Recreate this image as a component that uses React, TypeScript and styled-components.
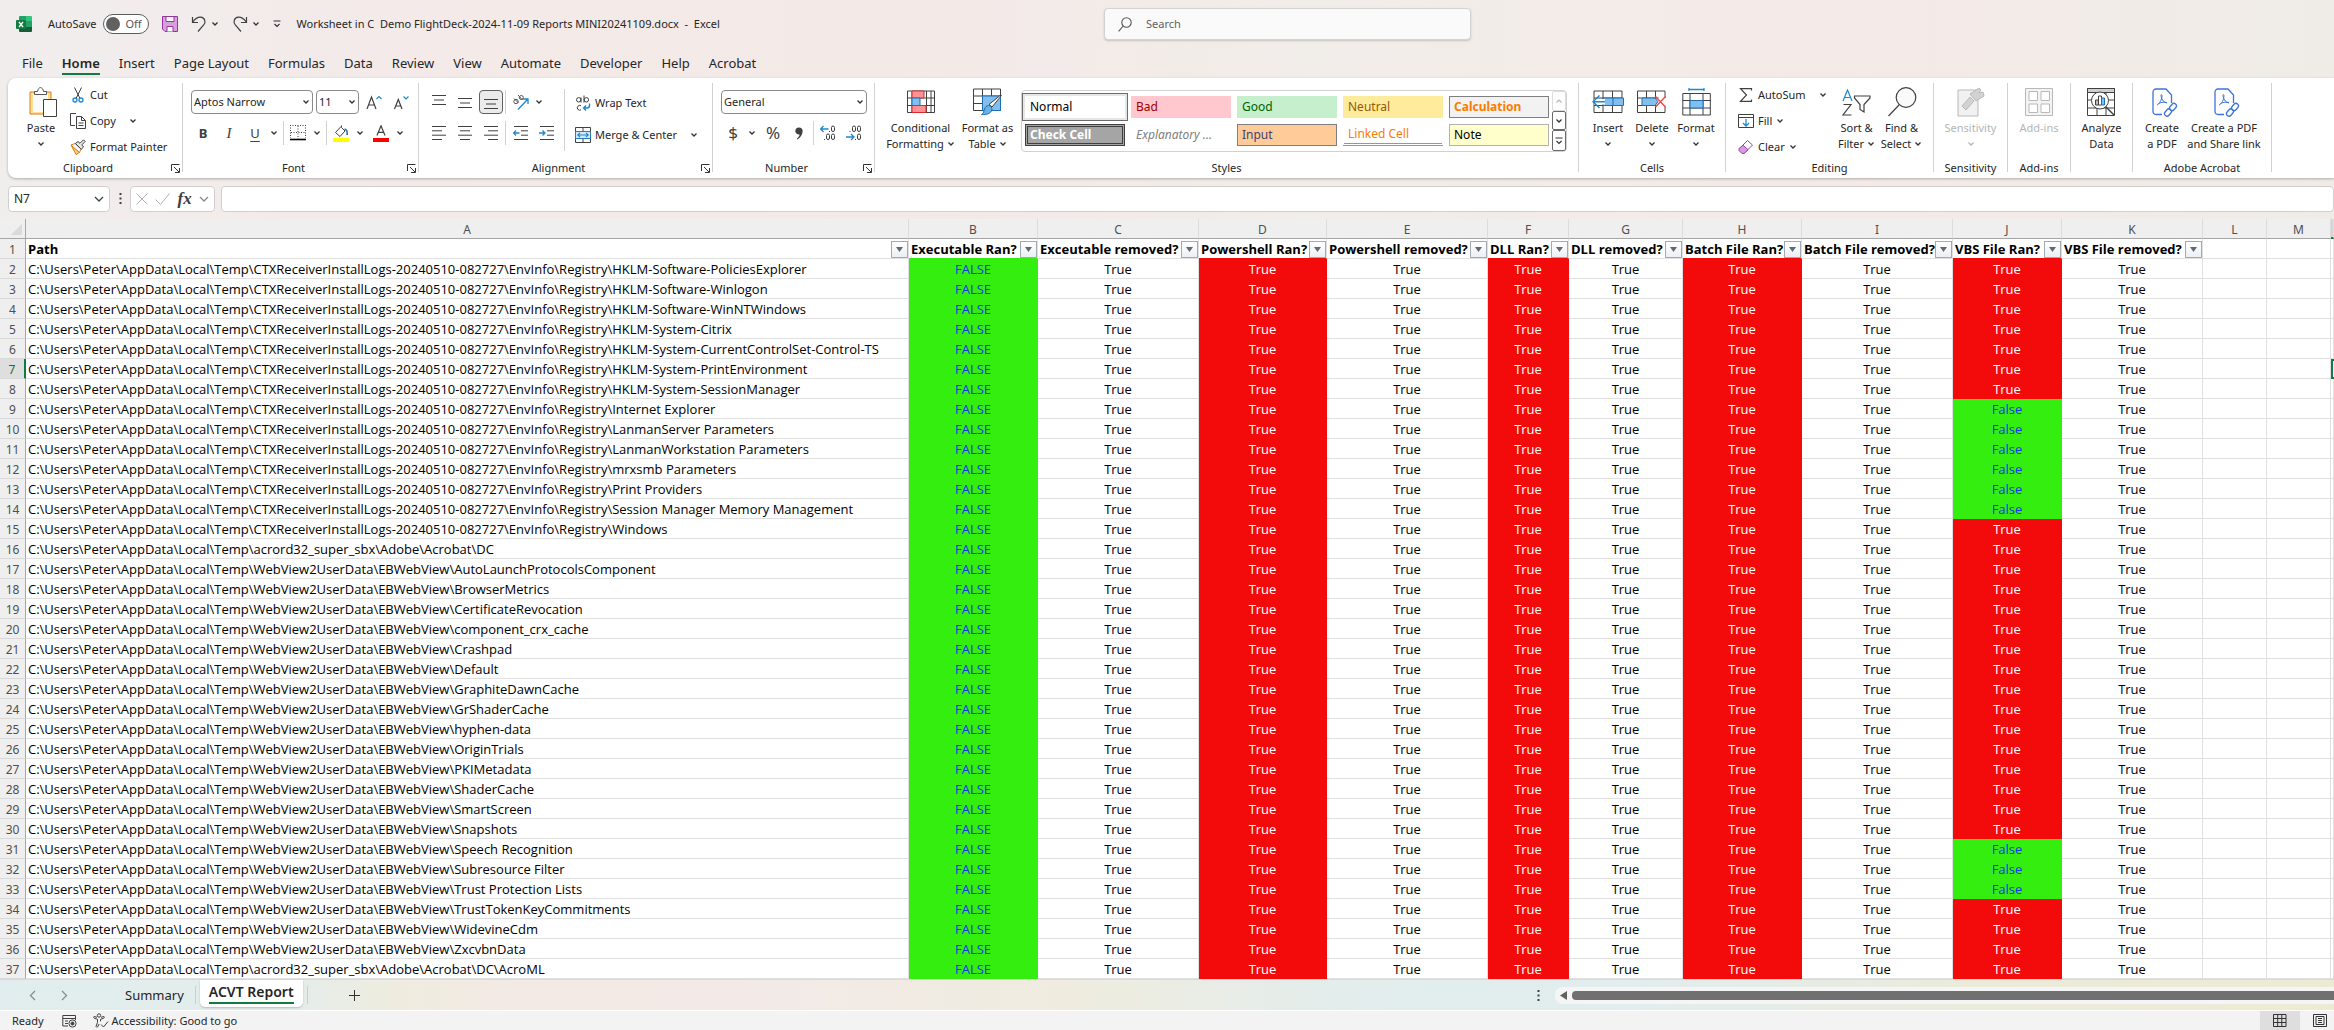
import React from "react";
import styled, { createGlobalStyle, css } from "styled-components";

const UI_FONT = '"Noto Sans", "Open Sans", sans-serif';
const CELL_FONT = '"Open Sans", "Noto Sans", sans-serif';
const INK = "#262626";
const BLUE = "#1e88d2";
const GREEN = "#107c41";

const GlobalStyle = createGlobalStyle`
  * { box-sizing: border-box; }
  body { margin: 0; overflow: hidden; }
  button, input, select { font: inherit; color: inherit; }
  button { border: 0; padding: 0; background: none; }
  svg { display: block; flex: none; }
`;

const Window = styled.div`
  display: flex;
  flex-direction: column;
  height: 100vh;
  overflow: hidden;
  font: 11px/16px ${UI_FONT};
  color: ${INK};
  background: linear-gradient(90deg, #f0eeed 0, #f3eae9 16%, #f3eae8 42%, #f1ede9 56%, #f4eae8 80%, #efece7 100%);
`;

/* ---------- title bar ---------- */

const TitleBar = styled.header`
  display: grid;
  grid-template-columns: minmax(0, 1104fr) 367px minmax(0, 863fr);
  align-items: center;
  height: 48px;
`;
const QuickAccess = styled.div`
  display: flex;
  align-items: center;
  gap: 13px;
  padding-left: 16px;
`;
const AutoSave = styled.label`
  display: flex;
  align-items: center;
  gap: 7px;
  margin-left: 3px;
  white-space: nowrap;
`;
const Toggle = styled.span`
  display: flex;
  align-items: center;
  gap: 5px;
  width: 46px;
  height: 20px;
  padding-left: 2px;
  border: 1px solid #5c5c5c;
  border-radius: 10px;
  background: #fff;
  color: #555;
`;
const ToggleInput = styled.input`
  appearance: none;
  width: 14px;
  height: 14px;
  margin: 0;
  border-radius: 50%;
  background: #616161;
`;
const ToolPair = styled.div`
  display: flex;
  align-items: center;
  gap: 4px;
`;
const DocTitle = styled.h1`
  margin: 0 0 0 2px;
  font: inherit;
  white-space: pre;
`;
const SearchBox = styled.label`
  display: flex;
  align-items: center;
  gap: 14px;
  height: 32px;
  padding-left: 13px;
  border: 1px solid #d6d2d1;
  border-radius: 4px;
  background: #fafafa;
  box-shadow: 0 1px 2px rgba(0, 0, 0, 0.18);
`;
const SearchInput = styled.input`
  flex: 1;
  min-width: 0;
  border: 0;
  padding: 0;
  background: none;
  &::placeholder { color: #616161; opacity: 1; }
`;

/* ---------- ribbon ---------- */

const TabList = styled.nav`
  display: flex;
  gap: 19px;
  height: 30px;
  padding: 2px 0 0 22px;
`;
const RibbonTab = styled.button<{ $active?: boolean }>`
  height: 25px;
  padding-top: 3px;
  border-bottom: 2px solid ${(p) => (p.$active ? GREEN : "transparent")};
  font: ${(p) => (p.$active ? 600 : 400)} 13px/20px ${UI_FONT};
  white-space: nowrap;
`;
const Ribbon = styled.section`
  display: flex;
  height: 100px;
  margin-left: 8px;
  border-radius: 8px 0 0 8px;
  background: #fff;
  box-shadow: 0 1px 3px rgba(0, 0, 0, 0.28);
`;
const Divider = styled.span`
  flex: none;
  width: 1px;
  margin: 5px 0 6px;
  background: #d1d1d1;
`;
const GroupBox = styled.div<{ $w: number }>`
  display: flex;
  flex-direction: column;
  flex: none;
  width: ${(p) => p.$w}px;
  padding: 5px 0 2px;
`;
const GroupBody = styled.div<{ $pad: number }>`
  display: flex;
  flex: 1;
  padding-left: ${(p) => p.$pad}px;
`;
const GroupFooter = styled.div<{ $launcher?: boolean }>`
  display: grid;
  grid-template-columns: ${(p) => (p.$launcher ? "1fr 14px" : "1fr")};
  align-items: center;
  height: 16px;
  white-space: nowrap;
`;
const GroupName = styled.span`
  justify-self: center;
`;
const LauncherButton = styled.button`
  display: grid;
  place-items: center;
`;
const Rows = styled.div`
  display: flex;
  flex-direction: column;
  gap: 7px;
  padding-top: 7px;
`;
const ToolRow = styled.div<{ $gap?: number }>`
  display: flex;
  gap: ${(p) => p.$gap ?? 2}px;
  height: 24px;
`;
const RowDivider = styled.span`
  width: 1px;
  background: #d1d1d1;
`;
const TallDivider = styled.span`
  width: 1px;
  height: 62px;
  margin: 6px 10px 0 6px;
  background: #d1d1d1;
`;
const IconButton = styled.button<{ $on?: boolean }>`
  display: grid;
  place-items: center;
  width: 24px;
  height: 24px;
  border-radius: 4px;
  ${(p) => p.$on && css`
    border: 1px solid #616161;
    background: #ebebeb;
  `}
`;
const ChevronButton = styled.button`
  display: grid;
  place-items: center;
  width: 14px;
  height: 24px;
`;
const Split = styled.div`
  display: flex;
`;
const Glyph = styled.span<{ $kind: "bold" | "italic" | "underline" | "symbol" | "function" }>`
  color: #404040;
  line-height: 20px;
  ${(p) => p.$kind === "bold" && css`font-weight: 700; font-size: 13px;`}
  ${(p) => p.$kind === "italic" && css`font: italic 15px/20px "Liberation Serif", serif;`}
  ${(p) => p.$kind === "function" && css`font: italic 700 17px/20px "Liberation Serif", serif;`}
  ${(p) => p.$kind === "underline" && css`font-size: 13px; text-decoration: underline; text-underline-offset: 3px;`}
  ${(p) => p.$kind === "symbol" && css`font-size: 17px;`}
`;
const Combo = styled.span<{ $w: number }>`
  display: grid;
  grid-template-columns: 1fr 10px;
  align-items: center;
  width: ${(p) => p.$w}px;
  height: 24px;
  border: 1px solid #8a8a8a;
  border-radius: 4px;
  background: #fff;
  & > svg { grid-area: 1 / 2; pointer-events: none; }
`;
const ComboSelect = styled.select`
  grid-area: 1 / 1 / 2 / 3;
  appearance: none;
  width: 100%;
  height: 22px;
  border: 0;
  padding: 0 2px;
  background: none;
`;
const CommandColumn = styled.div<{ $left?: number; $gap?: number; $top?: number; $w?: number }>`
  display: flex;
  flex-direction: column;
  gap: ${(p) => p.$gap ?? 2}px;
  padding: ${(p) => p.$top ?? 0}px 0 0 ${(p) => p.$left ?? 0}px;
  width: ${(p) => (p.$w ? `${p.$w}px` : "auto")};
`;
const Command = styled.button<{ $wide?: boolean }>`
  display: flex;
  align-items: center;
  gap: 4px;
  height: 24px;
  white-space: nowrap;
  & > svg:last-child:not(:first-child) { margin-left: ${(p) => (p.$wide ? 9 : 0)}px; }
`;
const BigCommand = styled.button<{ $w: number }>`
  display: flex;
  flex-direction: column;
  align-items: center;
  align-self: flex-start;
  width: ${(p) => p.$w}px;
  padding-top: 4px;
  white-space: nowrap;
  &:disabled { color: #b5b5b5; }
`;
const BigIcon = styled.span`
  display: grid;
  place-items: center;
  height: 30px;
  margin-bottom: 3px;
`;
const BigLine = styled.span`
  display: flex;
  align-items: center;
  gap: 3px;
  height: 16px;
`;

/* ---------- cell style gallery ---------- */

const Gallery = styled.div`
  display: flex;
  width: 546px;
  height: 62px;
  margin-top: 7px;
  border: 1px solid #d1d1d1;
  border-radius: 4px;
`;
const Swatches = styled.div`
  display: grid;
  grid-template-columns: repeat(5, 100px);
  grid-auto-rows: 22px;
  gap: 6px;
  padding: 5px 3px;
`;
type Look = "normal" | "bad" | "good" | "neutral" | "calculation" | "check" | "explain" | "input" | "linked" | "note";
const looks: Record<Look, ReturnType<typeof css>> = {
  normal: css`background: #fff; color: #000; box-shadow: 0 0 0 2px #e6e6e6, 0 0 0 3px #6b6b6b;`,
  bad: css`background: #ffc7ce; color: #9c0006;`,
  good: css`background: #c6efce; color: #006100;`,
  neutral: css`background: #ffeb9c; color: #9c5700;`,
  calculation: css`background: #f2f2f2; color: #fa7d00; font-weight: 700; border-color: #7f7f7f;`,
  check: css`background: #a5a5a5; color: #fff; font-weight: 700; border: 3px double #3f3f3f; padding-left: 2px;`,
  explain: css`color: #7f7f7f; font-style: italic;`,
  input: css`background: #ffcc99; color: #3f3f76; border-color: #7f7f7f;`,
  linked: css`color: #fa7d00; border-bottom: 3px double #ff8001;`,
  note: css`background: #ffffcc; color: #000; border-color: #b2b2b2;`,
};
const Swatch = styled.button<{ $look: Look }>`
  display: flex;
  align-items: center;
  padding: 0 0 0 4px;
  border: 1px solid transparent;
  font-size: 12px;
  text-align: left;
  white-space: nowrap;
  ${(p) => looks[p.$look]}
`;
const GalleryScroll = styled.div`
  display: grid;
  grid-template-rows: 20px 19px 21px;
  width: 14px;
`;
const ScrollStep = styled.button`
  display: grid;
  place-items: center;
  width: 14px;
  border: 1px solid #6b6b6b;
  border-radius: 2px;
  color: ${INK};
  &:disabled { border-color: #dcdcdc; color: #b5b5b5; }
`;

/* ---------- formula bar ---------- */

const FormulaBar = styled.div`
  display: flex;
  align-items: center;
  height: 41px;
  padding: 0 0 0 8px;
`;
const Field = styled.div<{ $w?: number }>`
  display: flex;
  align-items: center;
  justify-content: space-between;
  flex: ${(p) => (p.$w ? `0 0 ${p.$w}px` : "1")};
  min-width: 0;
  height: 26px;
  padding: 0 5px;
  border: 1px solid #d1cfce;
  border-radius: 4px;
  background: #fff;
`;
const BareInput = styled.input`
  flex: 1;
  min-width: 0;
  width: 0;
  padding: 0;
  border: 0;
  background: none;
  font-size: 12px;
`;
const BarDots = styled.span`
  display: grid;
  place-items: center;
  width: 20px;
`;
const Spacer = styled.span`
  width: 6px;
`;

/* ---------- grid ---------- */

const SheetArea = styled.main`
  flex: 1;
  min-height: 0;
  overflow: hidden;
  background: #fff;
`;
const Sheet = styled.table`
  width: 100%;
  table-layout: fixed;
  border-collapse: separate;
  border-spacing: 0;
  font: 13px/17px ${CELL_FONT};
  color: #000;
`;
const Col = styled.col<{ $w?: number }>`
  width: ${(p) => (p.$w ? `${p.$w}px` : "auto")};
`;
const ColumnHead = styled.th<{ $active?: boolean }>`
  height: 20px;
  padding: 1px 0 0;
  overflow: hidden;
  border-right: 1px solid #dcdcdc;
  border-bottom: ${(p) => (p.$active ? `2px solid ${GREEN}` : "1px solid #a6a6a6")};
  background: ${(p) => (p.$active ? "#d6d6d6" : "#efefef")};
  color: #505050;
  font: 12px/17px ${UI_FONT};
`;
const Corner = styled(ColumnHead)`
  border-right: 1px solid #a6a6a6;
`;
const CornerMark = styled.span`
  display: block;
  width: 11px;
  height: 11px;
  margin: 1px 3px 0 auto;
  background: #dadada;
  clip-path: polygon(100% 0, 100% 100%, 0 100%);
`;
const RowHead = styled.th<{ $active?: boolean }>`
  height: 20px;
  padding: 2px 0 0;
  border-right: ${(p) => (p.$active ? `2px solid ${GREEN}` : "1px solid #a6a6a6")};
  border-bottom: 1px solid #d9d9d9;
  background: ${(p) => (p.$active ? "#dedede" : "#efefef")};
  color: ${(p) => (p.$active ? "#0f703b" : "#505050")};
  font: 12px/17px ${UI_FONT};
`;
type Fill = "red" | "green" | undefined;
const fills = {
  red: { back: "#f30b0b", ink: "#fff" },
  green: { back: "#33ee0f", ink: "#1a35e8" },
};
const Cell = styled.td<{ $fill?: Fill; $left?: boolean }>`
  height: 20px;
  padding: 2px 0 0 ${(p) => (p.$left ? 2 : 0)}px;
  overflow: hidden;
  border-right: 1px solid #e0e0e0;
  border-bottom: 1px solid #e0e0e0;
  text-align: ${(p) => (p.$left ? "left" : "center")};
  white-space: nowrap;
  ${(p) => p.$fill && css`
    border-color: ${fills[p.$fill].back};
    background: ${fills[p.$fill].back};
    color: ${fills[p.$fill].ink};
  `}
`;
const FieldHead = styled.th<{ $fill?: Fill }>`
  height: 20px;
  padding: 0;
  border-right: 1px solid #e0e0e0;
  border-bottom: 1px solid ${(p) => (p.$fill ? fills[p.$fill].back : "#e0e0e0")};
  font-weight: 700;
  text-align: left;
`;
const FieldHeadInner = styled.div`
  display: flex;
  align-items: center;
  justify-content: space-between;
  height: 19px;
  padding: 1px 0 0 2px;
  white-space: nowrap;
`;
const FilterButton = styled.button`
  display: grid;
  place-items: center;
  flex: none;
  width: 17px;
  height: 17px;
  border: 1px solid #a3aab3;
  background: linear-gradient(#fff, #eceff3);
`;
const ActiveCell = styled(Cell)`
  border: 2px solid ${GREEN};
  border-right: 0;
`;

/* ---------- sheet tabs and status bar ---------- */

const SheetBar = styled.footer`
  display: grid;
  grid-template-columns: minmax(0, 1528fr) minmax(0, 806fr);
  height: 32px;
  border-top: 1px solid #d9d9d9;
  border-bottom: 1px solid #fff;
  background: linear-gradient(90deg, #e1edee 0, #e3edeb 12%, #efecdf 17%, #f3eae5 22%, #f3eae8 32%, #efecdf 46%, #e2edec 58%, #e1edee 70%, #ebebda 85%, #edead4 100%);
`;
const SheetTabs = styled.div`
  display: flex;
  align-items: flex-start;
  padding-left: 16px;
`;
const PageButton = styled.button`
  display: grid;
  place-items: center;
  width: 32px;
  height: 30px;
`;
const SheetTab = styled.button<{ $active?: boolean }>`
  height: 30px;
  padding: 0 9px;
  font-size: 13px;
  line-height: 21px;
  white-space: nowrap;
  ${(p) => p.$active && css`
    height: 27px;
    margin: 0 2px;
    padding-bottom: 2px;
    border-radius: 0 0 5px 5px;
    background: #fff;
    font-size: 14px;
    font-weight: 600;
    box-shadow: 0 1px 2px rgba(0, 0, 0, 0.2);
  `}
`;
const TabText = styled.span`
  display: block;
  border-bottom: 2px solid ${GREEN};
`;
const TabGroup = styled.div`
  display: flex;
  align-items: flex-start;
  margin-left: 36px;
`;
const TabDivider = styled.span`
  width: 1px;
  height: 18px;
  margin: 6px 2px 0;
  background: #c9cfce;
`;
const AddSheet = styled(PageButton)`
  margin-left: 29px;
`;
const ScrollZone = styled.div`
  display: flex;
  align-items: center;
`;
const ScrollTrack = styled.div`
  display: flex;
  align-items: center;
  gap: 5px;
  flex: 1;
  height: 17px;
  margin-left: 7px;
  padding-left: 5px;
  border-radius: 8px 0 0 8px;
  background: #f5f5f5;
`;
const ScrollThumb = styled.span`
  flex: 1;
  height: 9px;
  border-radius: 4px 0 0 4px;
  background: #707070;
`;
const StatusBar = styled.div`
  display: flex;
  align-items: center;
  height: 19px;
  padding-left: 12px;
  background: #f3f3f3;
`;
const StatusItem = styled.span<{ $gap?: number }>`
  display: flex;
  align-items: center;
  gap: 3px;
  margin-right: ${(p) => p.$gap ?? 0}px;
`;
const ViewButtons = styled.div`
  display: flex;
  margin-left: auto;
`;
const ViewButton = styled.button<{ $on?: boolean }>`
  display: grid;
  place-items: center;
  width: ${(p) => (p.$on ? 40 : 34)}px;
  height: 19px;
  padding-left: ${(p) => (p.$on ? 0 : 6)}px;
  background: ${(p) => (p.$on ? "#dedede" : "none")};
`;

/* ---------- drawings ---------- */

type SvgProps = { w: number; h: number; children: React.ReactNode; stroke?: string; sw?: number };
const Draw = ({ w, h, children, stroke = "#404040", sw = 1 }: SvgProps) => (
  <svg width={w} height={h} viewBox={`0 0 ${w} ${h}`} fill="none" stroke={stroke} strokeWidth={sw} aria-hidden="true">
    {children}
  </svg>
);
const Chevron = ({ color = "#333" }: { color?: string }) => (
  <Draw w={8} h={6} stroke={color} sw={1.3}><path d="M1.5 1.5 4 4l2.5-2.5" /></Draw>
);
const BigChevron = ({ color = "#404040" }: { color?: string }) => (
  <Draw w={10} h={8} stroke={color} sw={1.3}><path d="M1 2l4 4 4-4" /></Draw>
);
const Launcher = () => (
  <Draw w={9} h={9} stroke="#333"><path d="M.5 7V.5H8.5M3 3l5 5M8.5 4v4.5H4" /></Draw>
);
const Dots = () => (
  <svg width="3" height="11" viewBox="0 0 3 11" fill="#404040" aria-hidden="true">
    <path d="M.5 0h2v2h-2zM.5 4.5h2v2h-2zM.5 9h2v2h-2z" />
  </svg>
);
const ExcelLogo = () => (
  <svg width="16" height="16" viewBox="0 0 16 16" aria-hidden="true">
    <path d="M4 0h6v8H3V1a1 1 0 0 1 1-1z" fill="#21a366" />
    <path d="M10 0h5a1 1 0 0 1 1 1v4h-6z" fill="#33c481" />
    <path d="M3 5h7v6H3z" fill="#107c41" />
    <path d="M10 5h6v6h-6z" fill="#21a366" />
    <path d="M3 11h13v4a1 1 0 0 1-1 1H4a1 1 0 0 1-1-1z" fill="#185c37" />
    <rect y="4" width="10" height="9" rx="1" fill="#107c41" />
    <path d="M3 6l4 5M7 6l-4 5" stroke="#fff" strokeWidth="1.4" />
  </svg>
);
const SaveIcon = () => (
  <Draw w={16} h={16} stroke="#93359f"><path d="M.5.5h15v15H3L.5 13z" fill="#d7a0dc" /><path d="M4 .5h8v5H4zM5 15.5v-5h6v5" fill="#fff" /></Draw>
);
const UndoIcon = () => (
  <Draw w={16} h={16} sw={1.2}><path d="M1.5 1v5.500h5.500M1.800 6C4 3 6.500 1 9.500 1.200c4.500.4 5.800 5 3 8L7 15.500" /></Draw>
);
const RedoIcon = () => (
  <Draw w={16} h={16} sw={1.2}><path d="M14.500 1v5.500H9M14.200 6C12 3 9.500 1 6.500 1.200 2 1.600.7 6.200 3.500 9.200L9 15.500" /></Draw>
);
const CustomizeIcon = () => <Draw w={8} h={8} stroke="#333" sw={1.2}><path d="M.5 1h7M1.500 4 4 6.500 6.500 4" /></Draw>;
const SearchIcon = () => <Draw w={14} h={15} stroke="#555" sw={1.1}><circle cx="8.500" cy="5.500" r="4.700" /><path d="M5.200 9 .6 14.400" /></Draw>;

const PasteIcon = () => (
  <svg width="32" height="30" viewBox="-4 0 32 30" fill="none" stroke="#404040" aria-hidden="true">
    <path d="M1 5h21v22H1z" fill="#fcdf9b" stroke="#e07a10" />
    <path d="M4 7h15v18H4z" fill="#fafafa" stroke="none" />
    <path d="M5.500 7.500v-3h3C9 2 10 .6 11.500.6S14 2 14.500 4.500h3v3z" fill="#fff" stroke="#555" />
    <path d="M14.500 12.500h13v17h-13z" fill="#fff" />
  </svg>
);
const CutIcon = () => (
  <Draw w={16} h={16}><path d="M4.500.5l5.500 11M11.500.5 6 11.500" /><g stroke={BLUE} strokeWidth="1.300"><circle cx="5" cy="13" r="2" /><circle cx="11" cy="13" r="2" /></g></Draw>
);
const CopyIcon = () => (
  <Draw w={16} h={16}><path d="M5 12.500H.5V.5h5.500M6.500 3.500h5l4 4v8h-9z" /><path d="M11.500 3.500v4h4M8.500 10h5M8.500 12.500h5" /></Draw>
);
const PainterIcon = () => (
  <Draw w={16} h={16}><path d="M1 6l8.500 7.500L6 15.500z" fill="#fbd08d" stroke="#e07a10" /><path d="M1 6l4-1.500 6 5.500-1.500 3.500z" fill="#fff" stroke="#e07a10" /><path d="M5.500 4.500 8 2.500l2 1.800L13.500.8l1.700 1.700-3.400 3.400L13.500 8l-2.300 2.300z" fill="#e8e8e8" /></Draw>
);
const GrowIcon = () => <Draw w={16} h={15} sw={1.2}><path d="M1 14 5.500 2 10 14M2.700 10h5.600" /><path d="M10.500 4 13 1.500 15.500 4" stroke={BLUE} /></Draw>;
const ShrinkIcon = () => <Draw w={16} h={15} sw={1.2}><path d="M1.500 14 5.300 4.500 9 14M3 11h4.600" /><path d="M10.500 1.500 13 4l2.500-2.500" stroke={BLUE} /></Draw>;
const BordersIcon = () => (
  <Draw w={16} h={16}><path d="M.5 0v13M15.500 0v13M0 .5h16M8 1v13M1 7.500h14" strokeDasharray="1 1.500" /><path d="M0 14.500h16" stroke="#000" strokeWidth="1.600" /></Draw>
);
const FillIcon = () => (
  <Draw w={17} h={17}><path d="M8 1.500 2.500 7.500l4.500 4 5-5.500L8.500 2.500V.5" /><path d="M11.500 4c2 .3 3 2 2.700 6" stroke="#1f6fb5" strokeWidth="1.600" /><path d="M0 13h16v4H0z" fill="#ff0" stroke="none" /></Draw>
);
const FontColorIcon = () => (
  <Draw w={16} h={17} sw={1.2}><path d="M4 10.500 8 .8l4 9.700M5.400 7.300h5.200" /><path d="M0 13h16v4H0z" fill="#f00" stroke="none" /></Draw>
);
const Lines = ({ d }: { d: string }) => <Draw w={14} h={14}><path d={d} /></Draw>;
const AngleIcon = () => (
  <Draw w={17} h={17}><g stroke="#555"><circle cx="4" cy="7.500" r="2.200" /><path d="M2 4.500l4.500 4.500M6 1l4.500 5" /><circle cx="9.300" cy="3.500" r="2" /></g><path d="M6 15.500 15.500 5.500M11 5h5v5" stroke={BLUE} strokeWidth="1.300" /></Draw>
);
const WrapIcon = () => (
  <Draw w={16} h={17}><circle cx="3.700" cy="4.800" r="2.200" /><path d="M6 2.500v5M9 .5v7" /><circle cx="11.400" cy="4.800" r="2.200" /><path d="M6 10.800a2.400 2.400 0 1 0 0 4" /><path d="M14.500 8.500v2c0 1.500-1 2.500-2.500 2.500H8.500M11 10.500 8.500 13l2.500 2.500" stroke={BLUE} strokeWidth="1.400" /></Draw>
);
const MergeIcon = () => (
  <Draw w={16} h={16}><path d="M.5.5h15v15H.5zM8 .5v4M8 11.500v4" /><path d="M.5 4.500h15v7H.5z" fill="#d3e8f8" stroke="#2b7bb9" /><path d="M3 8h10M5 5.800 2.800 8 5 10.200M11 5.800 13.200 8 11 10.200" stroke={BLUE} strokeWidth="1.200" /></Draw>
);
const IndentIcon = ({ out }: { out?: boolean }) => (
  <Draw w={15} h={14}><path d="M1 .5h14M8 4.800h7M8 9.200h7M1 13.500h14" /><path d={out ? "M6.500 7h-6M3 4.500.6 7 3 9.500" : "M0 7h6M3.500 4.500 6 7 3.500 9.500"} stroke={BLUE} strokeWidth="1.300" /></Draw>
);
const CommaIcon = () => (
  <svg width="8" height="13" viewBox="0 0 8 13" aria-hidden="true"><path d="M4 .5a3.400 3.400 0 0 1 3.600 3.700c0 3.600-2.300 6.500-5.300 8.300l-.5-.8c1.500-1.200 2.600-2.600 2.800-4.300A3.500 3.500 0 1 1 4 .5z" fill="#404040" /></svg>
);
const DecimalIcon = ({ more }: { more?: boolean }) => (
  <Draw w={16} h={16}>
    {!more && <rect x="6.500" y="1" width="3" height="5.500" rx="1.500" />}
    <rect x="11.500" y="1" width="3" height="5.500" rx="1.500" />
    {more && <rect x="6.500" y="9" width="3" height="5.500" rx="1.500" />}
    <rect x="11.500" y="9" width="3" height="5.500" rx="1.500" />
    <path d={more ? "M9 6.500h1M4 14.500h1" : "M3.500 6.500h1M9 14.500h1"} />
    <path d={more ? "M8.500 4h-8M3.500 1 .6 4l2.900 3" : "M0 12h8M5 9l3 3-3 3"} stroke={BLUE} strokeWidth="1.300" />
  </Draw>
);
const CondIcon = () => (
  <Draw w={28} h={24}><path d="M.5 1h27v21.500H.5zM.5 8h27M.5 15.500h27M19.500 1v21.500M24 1v21.500M5 1v21.500" /><path d="M5 1h12v7H5zM5 15.500h14v7H5z" fill="#ff9297" stroke="#d92b2b" /><path d="M5 8h8v7.500H5z" fill="#83beec" stroke="#1f6fb5" /></Draw>
);
const TableIcon = () => (
  <Draw w={30} h={28}><path d="M.5 1h27v21.500H.5zM.5 8h27M.5 15.500h27M9.500 1v21.500M18.500 1v21.500" /><path d="M9.500 8h18v14.500h-18z" fill="#83beec" stroke="#1f6fb5" /><path d="M28.500 7.500 19 19l-3-2.500L27 7.500z" fill="#fff" /><path d="M15.500 17.500c2 0 4 2 3.300 4.500-.8 3-4 5-10.300 4.500 2.500-1 2-3 3-5.500.7-2 2-3.500 4-3.500z" fill="#6cb0e4" stroke="#1f6fb5" /></Draw>
);
const InsertIcon = () => (
  <Draw w={32} h={24}><path d="M2 1h28v21.500H2zM11 1v21.500M20.500 1v21.500M2 8h28M2 15.500h28" /><path d="M11 8h20.500v7.500H11z" fill="#83beec" stroke="#1f6fb5" /><path d="M21 8v7.500" stroke="#1f6fb5" /><path d="M2 9h11v5.500H2z" fill="#fff" stroke="none" /><path d="M13 11.700H1M7.500 5.500 1 11.700 7.500 18" stroke={BLUE} strokeWidth="1.400" /></Draw>
);
const DeleteIcon = () => (
  <Draw w={32} h={24}><path d="M29 8V1H1.500v7h21M29 16v6.500H1.500v-7h20M10.500 1v7M19.500 1v7M10.500 15.500v7M19.500 15.500v7M1.500 15.500v-7.500" /><path d="M6 8h13l3 3.700-3 3.800H6z" fill="#83beec" stroke="#1f6fb5" /><path d="M19.500 6.500l10 10.500M29.500 6.500 19.500 17" stroke="#f0504c" strokeWidth="1.500" /></Draw>
);
const FormatIcon = () => (
  <Draw w={29} h={28}><path d="M.8 5.500h27.500V27H.8zM.8 12.500h27.500M.8 20h27.500M8 5.500V27M21 5.500V27" /><path d="M8 12.500h13V20H8z" fill="#83beec" stroke="#1f6fb5" /><path d="M7 1.500h15M7 0v3M22 0v3" stroke={BLUE} strokeWidth="1.300" /></Draw>
);
const SumIcon = () => <Draw w={16} h={16} sw={1.2}><path d="M13.500 3.500V1.600H2.500L8.500 8l-6 6.400h11v-2" /></Draw>;
const FillDownIcon = () => <Draw w={16} h={16}><path d="M.5 1.500h15v13H.5zM.5 4.500h15" /><path d="M8 6v7M5 10l3 3 3-3" stroke={BLUE} strokeWidth="1.300" /></Draw>;
const ClearIcon = () => (
  <Draw w={16} h={16} stroke="#9b3fae"><path d="M9.500 1.500 14.500 6 6 14.500l-4.500-5z" fill="#fff" /><path d="M5 6.200l5 4.500L6 14.500H4l-3-3V9.500z" fill="#d79be0" /></Draw>
);
const SortIcon = () => (
  <Draw w={29} h={27} sw={1.2}><path d="M1 12 5.500 1 10 12M2.500 8.500h6" stroke={BLUE} /><path d="M1.500 15.500h7.500l-8 10.500H9.500" /><path d="M12.500 7h15.500v2l-6 6.500v7.500l-4-2.500v-5l-5.500-6.500z" /></Draw>
);
const FindIcon = () => <Draw w={30} h={30} sw={1.2}><circle cx="19" cy="10.500" r="9.800" fill="#fafafa" /><path d="M12 18 1.500 29" /></Draw>;
const SensitivityIcon = () => (
  <Draw w={28} h={30} stroke="#b9b9b9"><path d="M1 3h20v26H1z" fill="#f1f1f1" /><path d="M5 19 13 10l4 4-8 9z" fill="#d2d2d2" /><path d="M13 7l9-6 2 2-2 3 4-1 1 4-8 5z" fill="#d2d2d2" /></Draw>
);
const AddinsIcon = () => (
  <Draw w={28} h={28} stroke="#b9b9b9"><path d="M.5.5h27v27H.5z" fill="#f3f3f3" /><path d="M4 3.500h8.500v9H4zM16 3.500h8.500v9H16zM4 16h8.500v8.500H4zM16 16h8.500v8.500H16z" fill="#fff" /></Draw>
);
const AnalyzeIcon = () => (
  <Draw w={29} h={29}><path d="M.5.500h27v27H.5z" fill="#fff" /><path d="M.5.500h27v4H.5z" fill="#d0d0d0" /><path d="M.5 12h27M.5 20h27M10 5v22M19 5v22" /><circle cx="13" cy="12.500" r="8.500" fill="#fff" /><path d="M19 19l8 8" strokeWidth="1.500" /><path d="M8.500 12h3v5h-3z" fill="#bbb" /><path d="M11.500 8h3v9h-3z" fill="#fff" /><path d="M14.500 10h3v7h-3z" fill="#83beec" stroke="#1f6fb5" /></Draw>
);
const PdfIcon = () => (
  <svg width="32" height="30" viewBox="-6 0 32 30" fill="none" stroke="#3f74dc" strokeWidth="1.3" aria-hidden="true">
    <path d="M10 27.500H4a3 3 0 0 1-3-3V5a3 3 0 0 1 3-3h10l5.500 6v8" />
    <path d="M5 18c2.500-.8 5-5.500 5-9.500 0-1.500-1.500-1-1 .7 1 4 3 6.500 6 6.800M6.500 16.500c3-1.500 6-1.500 8.500-1" strokeWidth="1" />
    <rect x="17" y="17.500" width="8" height="5" rx="2.500" transform="rotate(-50 21 20)" />
    <rect x="12" y="23" width="8" height="5" rx="2.500" transform="rotate(-50 16 25.500)" />
  </svg>
);
const StepUp = () => <Draw w={8} h={6} stroke="currentColor" sw={1.2}><path d="M1.500 4.500 4 2l2.500 2.500" /></Draw>;
const MacroIcon = () => (
  <Draw w={15} h={14}><path d="M13.500 6V1.500H.8v10.500H6M.8 4.500h12.700M3 7h3M3 9.500h3" /><circle cx="10.500" cy="9.500" r="3.600" /><circle cx="10.500" cy="9.500" r="1.500" fill="#404040" /></Draw>
);
const AccessIcon = () => (
  <Draw w={16} h={15}><circle cx="6" cy="2.500" r="1.700" /><path d="M1 3.500c-.8 1 0 1.800 1 2l2.500.8v3L3 13.500c.5 1 1.500 1 2-.2l1-2.300M11 3.500c.8 1 0 1.800-1 2l-2.500.8v2M1 3.500 4 4.300M11 3.500l-3 .8M8 11.500l2.500 2.500L15 8.500" /></Draw>
);

/* ---------- composed parts ---------- */

type GroupProps = { name?: string; w: number; pad?: number; launcher?: boolean; children: React.ReactNode };
const Group = ({ name, w, pad = 0, launcher, children }: GroupProps) => (
  <>
    <GroupBox $w={w}>
      <GroupBody $pad={pad}>{children}</GroupBody>
      <GroupFooter $launcher={launcher}>
        <GroupName>{name}</GroupName>
        {launcher && <LauncherButton aria-label={`${name} settings`}><Launcher /></LauncherButton>}
      </GroupFooter>
    </GroupBox>
    <Divider />
  </>
);
type BigProps = { icon: React.ReactNode; w: number; lines: string[]; arrow?: boolean; disabled?: boolean };
const Big = ({ icon, w, lines, arrow, disabled }: BigProps) => {
  const tail = <Chevron color={disabled ? "#b5b5b5" : undefined} />;
  return (
    <BigCommand $w={w} disabled={disabled}>
      <BigIcon>{icon}</BigIcon>
      <BigLine>{lines[0]}</BigLine>
      <BigLine>{lines[1]}{arrow && tail}</BigLine>
    </BigCommand>
  );
};
const Pick = ({ w, label, value }: { w: number; label: string; value: string }) => (
  <Combo $w={w}>
    <ComboSelect aria-label={label} defaultValue={value}><option>{value}</option></ComboSelect>
    <Chevron />
  </Combo>
);
const SplitTool = ({ label, children }: { label: string; children: React.ReactNode }) => (
  <Split>
    <IconButton aria-label={label}>{children}</IconButton>
    <ChevronButton aria-label={`${label} options`}><Chevron /></ChevronButton>
  </Split>
);

const tabs = ["File", "Home", "Insert", "Page Layout", "Formulas", "Data", "Review", "View", "Automate", "Developer", "Help", "Acrobat"];
const swatches: [Look, string][] = [
  ["normal", "Normal"], ["bad", "Bad"], ["good", "Good"], ["neutral", "Neutral"], ["calculation", "Calculation"],
  ["check", "Check Cell"], ["explain", "Explanatory ..."], ["input", "Input"], ["linked", "Linked Cell"], ["note", "Note"],
];

const columns: { id: string; w?: number; title?: string; fill?: Fill }[] = [
  { id: "A", w: 883, title: "Path" },
  { id: "B", w: 129, title: "Executable Ran?", fill: "green" },
  { id: "C", w: 161, title: "Exceutable removed?" },
  { id: "D", w: 128, title: "Powershell Ran?", fill: "red" },
  { id: "E", w: 161, title: "Powershell removed?" },
  { id: "F", w: 81, title: "DLL Ran?", fill: "red" },
  { id: "G", w: 114, title: "DLL removed?" },
  { id: "H", w: 119, title: "Batch File Ran?", fill: "red" },
  { id: "I", w: 151, title: "Batch File removed?" },
  { id: "J", w: 109, title: "VBS File Ran?", fill: "red" },
  { id: "K", w: 141, title: "VBS File removed?" },
  { id: "L", w: 64 },
  { id: "M", w: 64 },
  { id: "N" },
];
const TEMP = "C:\\Users\\Peter\\AppData\\Local\\Temp\\";
const REG = TEMP + "CTXReceiverInstallLogs-20240510-082727\\EnvInfo\\Registry\\";
const WEB = TEMP + "WebView2UserData\\EBWebView\\";
const paths = [
  ...["HKLM-Software-PoliciesExplorer", "HKLM-Software-Winlogon", "HKLM-Software-WinNTWindows", "HKLM-System-Citrix",
    "HKLM-System-CurrentControlSet-Control-TS", "HKLM-System-PrintEnvironment", "HKLM-System-SessionManager",
    "Internet Explorer", "LanmanServer Parameters", "LanmanWorkstation Parameters", "mrxsmb Parameters",
    "Print Providers", "Session Manager Memory Management", "Windows"].map((n) => REG + n),
  TEMP + "acrord32_super_sbx\\Adobe\\Acrobat\\DC",
  ...["AutoLaunchProtocolsComponent", "BrowserMetrics", "CertificateRevocation", "component_crx_cache", "Crashpad",
    "Default", "GraphiteDawnCache", "GrShaderCache", "hyphen-data", "OriginTrials", "PKIMetadata", "ShaderCache",
    "SmartScreen", "Snapshots", "Speech Recognition", "Subresource Filter", "Trust Protection Lists",
    "TrustTokenKeyCommitments", "WidevineCdm", "ZxcvbnData"].map((n) => WEB + n),
  TEMP + "acrord32_super_sbx\\Adobe\\Acrobat\\DC\\AcroML",
];
const scriptBlocked = (row: number) => (row >= 9 && row <= 14) || (row >= 31 && row <= 33);
const ACTIVE_ROW = 7;

const DataCell = ({ id, fill, row, path }: { id: string; fill?: Fill; row: number; path: string }) => {
  if (id === "A") return <Cell $left>{path}</Cell>;
  if (id === "B") return <Cell $fill="green">FALSE</Cell>;
  if (id === "J" && scriptBlocked(row)) return <Cell $fill="green">False</Cell>;
  if (id === "N" && row === ACTIVE_ROW) return <ActiveCell />;
  if (id > "K") return <Cell />;
  return <Cell $fill={fill}>True</Cell>;
};

export default function App() {
  return (
    <Window>
      <GlobalStyle />
      <TitleBar>
        <QuickAccess>
          <ExcelLogo />
          <AutoSave>
            AutoSave
            <Toggle><ToggleInput type="checkbox" />Off</Toggle>
          </AutoSave>
          <button aria-label="Save"><SaveIcon /></button>
          <ToolPair><button aria-label="Undo"><UndoIcon /></button><Chevron /></ToolPair>
          <ToolPair><button aria-label="Redo"><RedoIcon /></button><Chevron /></ToolPair>
          <button aria-label="Customize toolbar"><CustomizeIcon /></button>
          <DocTitle>{"Worksheet in C  Demo FlightDeck-2024-11-09 Reports MINI20241109.docx  -  Excel"}</DocTitle>
        </QuickAccess>
        <SearchBox>
          <SearchIcon />
          <SearchInput placeholder="Search" aria-label="Search" />
        </SearchBox>
      </TitleBar>

      <TabList>
        {tabs.map((t) => <RibbonTab key={t} $active={t === "Home"}>{t}</RibbonTab>)}
      </TabList>

      <Ribbon>
        <Group name="Clipboard" w={174} pad={8} launcher>
          <Big icon={<PasteIcon />} w={50} lines={["Paste", ""]} arrow />
          <CommandColumn $left={4}>
            <Command><CutIcon />Cut</Command>
            <Command $wide><CopyIcon />Copy<Chevron /></Command>
            <Command><PainterIcon />Format Painter</Command>
          </CommandColumn>
        </Group>

        <Group name="Font" w={235} pad={8} launcher>
          <Rows>
            <ToolRow $gap={3}>
              <Pick w={122} label="Font name" value="Aptos Narrow" />
              <Pick w={43} label="Font size" value="11" />
              <IconButton aria-label="Increase font size"><GrowIcon /></IconButton>
              <IconButton aria-label="Decrease font size"><ShrinkIcon /></IconButton>
            </ToolRow>
            <ToolRow>
              <IconButton><Glyph $kind="bold">B</Glyph></IconButton>
              <IconButton><Glyph $kind="italic">I</Glyph></IconButton>
              <SplitTool label="Underline"><Glyph $kind="underline">U</Glyph></SplitTool>
              <RowDivider />
              <SplitTool label="Borders"><BordersIcon /></SplitTool>
              <RowDivider />
              <SplitTool label="Fill color"><FillIcon /></SplitTool>
              <SplitTool label="Font color"><FontColorIcon /></SplitTool>
            </ToolRow>
          </Rows>
        </Group>

        <Group name="Alignment" w={293} pad={8} launcher>
          <Rows>
            <ToolRow>
              <IconButton aria-label="Top align"><Lines d="M0 .5h14M2 5h10M0 9.500h14" /></IconButton>
              <IconButton aria-label="Middle align"><Lines d="M0 3.500h14M2 8h10M0 12.500h14" /></IconButton>
              <IconButton aria-label="Bottom align" $on><Lines d="M0 4.500h14M2 9h10M0 13.500h14" /></IconButton>
              <RowDivider />
              <SplitTool label="Orientation"><AngleIcon /></SplitTool>
            </ToolRow>
            <ToolRow>
              <IconButton aria-label="Align left"><Lines d="M0 .5h14M0 4.800h10M0 9.200h14M0 13.500h10" /></IconButton>
              <IconButton aria-label="Center"><Lines d="M0 .5h14M2 4.800h10M0 9.200h14M2 13.500h10" /></IconButton>
              <IconButton aria-label="Align right"><Lines d="M0 .5h14M4 4.800h10M0 9.200h14M4 13.500h10" /></IconButton>
              <RowDivider />
              <IconButton aria-label="Decrease indent"><IndentIcon out /></IconButton>
              <IconButton aria-label="Increase indent"><IndentIcon /></IconButton>
            </ToolRow>
          </Rows>
          <TallDivider />
          <CommandColumn $top={8} $gap={8}>
            <Command><WrapIcon />Wrap Text</Command>
            <Command $wide><MergeIcon />Merge &amp; Center<Chevron /></Command>
          </CommandColumn>
        </Group>

        <Group name="Number" w={161} pad={8} launcher>
          <Rows>
            <Pick w={146} label="Number format" value="General" />
            <ToolRow>
              <SplitTool label="Accounting format"><Glyph $kind="symbol">$</Glyph></SplitTool>
              <IconButton><Glyph $kind="symbol">%</Glyph></IconButton>
              <IconButton aria-label="Comma style"><CommaIcon /></IconButton>
              <RowDivider />
              <IconButton aria-label="Increase decimal"><DecimalIcon more /></IconButton>
              <IconButton aria-label="Decrease decimal"><DecimalIcon /></IconButton>
            </ToolRow>
          </Rows>
        </Group>

        <Group name="Styles" w={703} pad={12}>
          <Big icon={<CondIcon />} w={67} lines={["Conditional", "Formatting"]} arrow />
          <Big icon={<TableIcon />} w={67} lines={["Format as", "Table"]} arrow />
          <Gallery>
            <Swatches>
              {swatches.map(([look, text]) => <Swatch key={look} $look={look}>{text}</Swatch>)}
            </Swatches>
            <GalleryScroll>
              <ScrollStep disabled aria-label="Previous styles"><StepUp /></ScrollStep>
              <ScrollStep aria-label="Next styles"><Chevron /></ScrollStep>
              <ScrollStep aria-label="More styles"><CustomizeIcon /></ScrollStep>
            </GalleryScroll>
          </Gallery>
        </Group>

        <Group name="Cells" w={146} pad={7}>
          <Big icon={<InsertIcon />} w={44} lines={["Insert", ""]} arrow />
          <Big icon={<DeleteIcon />} w={44} lines={["Delete", ""]} arrow />
          <Big icon={<FormatIcon />} w={44} lines={["Format", ""]} arrow />
        </Group>

        <Group name="Editing" w={207} pad={12}>
          <CommandColumn $w={96}>
            <Command $wide><SumIcon />AutoSum<Chevron /></Command>
            <Command><FillDownIcon />Fill<Chevron /></Command>
            <Command><ClearIcon />Clear<Chevron /></Command>
          </CommandColumn>
          <Big icon={<SortIcon />} w={45} lines={["Sort &", "Filter"]} arrow />
          <Big icon={<FindIcon />} w={45} lines={["Find &", "Select"]} arrow />
        </Group>

        <Group name="Sensitivity" w={73}>
          <Big icon={<SensitivityIcon />} w={73} lines={["Sensitivity", ""]} arrow disabled />
        </Group>
        <Group name="Add-ins" w={62}>
          <Big icon={<AddinsIcon />} w={62} lines={["Add-ins", ""]} disabled />
        </Group>
        <Group w={61}>
          <Big icon={<AnalyzeIcon />} w={61} lines={["Analyze", "Data"]} />
        </Group>
        <Group name="Adobe Acrobat" w={138} pad={6}>
          <Big icon={<PdfIcon />} w={46} lines={["Create", "a PDF"]} />
          <Big icon={<PdfIcon />} w={78} lines={["Create a PDF", "and Share link"]} />
        </Group>
      </Ribbon>

      <FormulaBar>
        <Field $w={102}><BareInput defaultValue="N7" aria-label="Name box" /><BigChevron /></Field>
        <BarDots><Dots /></BarDots>
        <Field $w={85}>
          <Draw w={12} h={12} stroke="#b0b0b0"><path d="M.5.500l11 11M11.500.500l-11 11" /></Draw>
          <Draw w={15} h={12} stroke="#b0b0b0"><path d="M.5 6.500l5 5L14.500.500" /></Draw>
          <Glyph $kind="function">fx</Glyph>
          <BigChevron color="#8a8a8a" />
        </Field>
        <Spacer />
        <Field><BareInput aria-label="Formula" /></Field>
      </FormulaBar>

      <SheetArea>
        <Sheet>
          <colgroup>
            <Col $w={26} />
            {columns.map((c) => <Col key={c.id} $w={c.w} />)}
          </colgroup>
          <thead>
            <tr>
              <Corner aria-label="Select all"><CornerMark /></Corner>
              {columns.map((c) => (
                <ColumnHead key={c.id} $active={c.id === "N"}>{c.w ? c.id : null}</ColumnHead>
              ))}
            </tr>
          </thead>
          <tbody>
            <tr>
              <RowHead>1</RowHead>
              {columns.map((c) => c.title ? (
                <FieldHead key={c.id} $fill={c.fill}>
                  <FieldHeadInner>
                    {c.title}
                    <FilterButton aria-label={`Filter ${c.title}`}>
                      <svg width="7" height="5" viewBox="0 0 7 5" aria-hidden="true"><path d="M0 0h7L3.500 5z" fill="#606a76" /></svg>
                    </FilterButton>
                  </FieldHeadInner>
                </FieldHead>
              ) : <Cell key={c.id} />)}
            </tr>
            {paths.map((path, i) => (
              <tr key={path}>
                <RowHead $active={i + 2 === ACTIVE_ROW}>{i + 2}</RowHead>
                {columns.map((c) => <DataCell key={c.id} id={c.id} fill={c.fill} row={i + 2} path={path} />)}
              </tr>
            ))}
          </tbody>
        </Sheet>
      </SheetArea>

      <SheetBar>
        <SheetTabs>
          <PageButton aria-label="Previous sheet"><Draw w={7} h={11} stroke="#8a8a8a" sw={1.3}><path d="M6 1 1.500 5.500 6 10" /></Draw></PageButton>
          <PageButton aria-label="Next sheet"><Draw w={7} h={11} stroke="#8a8a8a" sw={1.3}><path d="M1 1l4.500 4.500L1 10" /></Draw></PageButton>
          <TabGroup>
            <SheetTab>Summary</SheetTab>
            <TabDivider />
            <SheetTab $active><TabText>ACVT Report</TabText></SheetTab>
            <TabDivider />
          </TabGroup>
          <AddSheet aria-label="New sheet"><Draw w={11} h={11} stroke="#333"><path d="M5.500 0v11M0 5.500h11" /></Draw></AddSheet>
        </SheetTabs>
        <ScrollZone>
          <BarDots><Dots /></BarDots>
          <ScrollTrack>
            <svg width="7" height="9" viewBox="0 0 7 9" aria-hidden="true"><path d="M7 0v9L0 4.500z" fill="#606060" /></svg>
            <ScrollThumb />
          </ScrollTrack>
        </ScrollZone>
      </SheetBar>

      <StatusBar>
        <StatusItem $gap={18}>Ready</StatusItem>
        <StatusItem $gap={16}><MacroIcon /></StatusItem>
        <StatusItem><AccessIcon />Accessibility: Good to go</StatusItem>
        <ViewButtons>
          <ViewButton $on aria-label="Normal view"><Draw w={14} h={13} stroke="#333"><path d="M.5.500h12.500v12H.5zM4.700.500v12M8.800.500v12M.5 4.500h12.500M.5 8.500h12.500" /></Draw></ViewButton>
          <ViewButton aria-label="Page layout view"><Draw w={14} h={13} stroke="#333"><path d="M.5.500h13v12H.5zM3 2.500h8v8H3zM5 4.500h4M5 6.500h4M5 8.500h4" /></Draw></ViewButton>
        </ViewButtons>
      </StatusBar>
    </Window>
  );
}
